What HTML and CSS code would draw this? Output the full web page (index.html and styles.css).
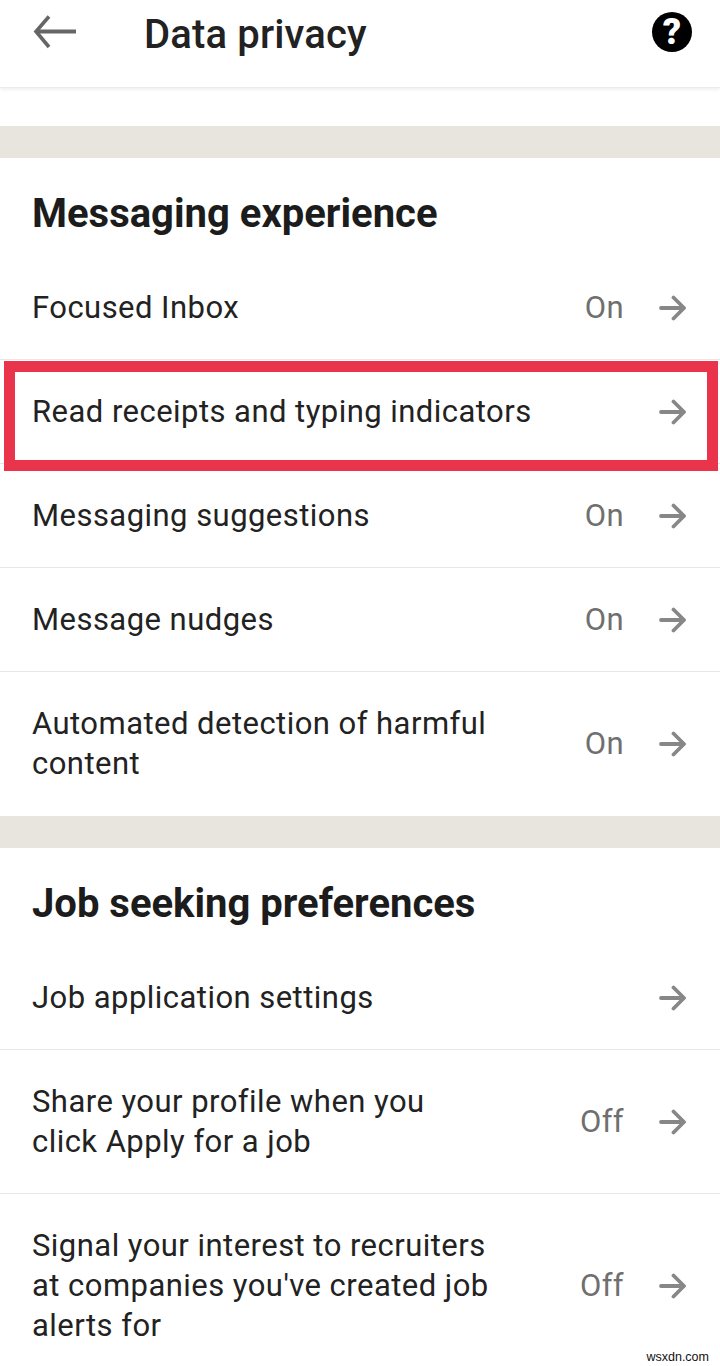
FILE: index.html
```html
<!DOCTYPE html>
<html lang="en">
<head>
<meta charset="utf-8">
<title>Data privacy</title>
<link rel="stylesheet" href="styles.css">
</head>
<body>
<svg class="sprite" width="0" height="0" aria-hidden="true">
  <symbol id="go" viewBox="0 0 28 28"><path d="M3 14H25M15.5 3.5 26 14 15.5 24.5" fill="none" stroke="#878787" stroke-width="3.8" stroke-linecap="round" stroke-linejoin="round"/></symbol>
</svg>
<div class="page">
  <header class="topbar">
    <svg class="back" viewBox="0 0 44 34" aria-hidden="true"><path d="M43 16.5H4" fill="none" stroke="#666" stroke-width="4"/><path d="M16 1.5 3 16.5 16 32" fill="none" stroke="#666" stroke-width="3.6"/></svg>
    <h1 class="title">Data privacy</h1>
    <span class="help">?</span>
  </header>
  <div class="gap"></div>
  <div class="band"></div>
  <section>
    <h2 class="heading">Messaging experience</h2>
    <div class="row"><span class="label">Focused Inbox</span><span class="value">On</span><svg class="go"><use href="#go"/></svg></div>
    <div class="row row-marked"><span class="label label-full">Read receipts and typing indicators</span><svg class="go"><use href="#go"/></svg><div class="mark"></div></div>
    <div class="row"><span class="label">Messaging suggestions</span><span class="value">On</span><svg class="go"><use href="#go"/></svg></div>
    <div class="row"><span class="label">Message nudges</span><span class="value">On</span><svg class="go"><use href="#go"/></svg></div>
    <div class="row row-last"><span class="label">Automated detection of harmful content</span><span class="value">On</span><svg class="go"><use href="#go"/></svg></div>
  </section>
  <div class="band"></div>
  <section>
    <h2 class="heading">Job seeking preferences</h2>
    <div class="row"><span class="label">Job application settings</span><svg class="go"><use href="#go"/></svg></div>
    <div class="row"><span class="label">Share your profile when you<br>click Apply for a job</span><span class="value">Off</span><svg class="go"><use href="#go"/></svg></div>
    <div class="row row-last"><span class="label">Signal your interest to recruiters at companies you've created job alerts for</span><span class="value">Off</span><svg class="go"><use href="#go"/></svg></div>
  </section>
  <div class="watermark">wsxdn.com</div>
</div>
</body>
</html>
```

FILE: styles.css
```css
* { box-sizing: border-box; }
html, body { margin: 0; padding: 0; background: #fff; }
.sprite { position: absolute; }
.page {
  position: relative;
  width: 720px;
  height: 1366px;
  overflow: hidden;
  font-family: Roboto, "Noto Sans", sans-serif;
  color: #1d1d1d;
}
.topbar {
  position: relative;
  display: flex;
  align-items: flex-start;
  height: 88px;
  padding: 12px 28px 0 33px;
  background: #fff;
  border-bottom: 1px solid #ececec;
  box-shadow: 0 2px 3px rgba(0,0,0,.06);
}
.back { width: 44px; height: 34px; flex: none; margin-top: 3px; }
.title {
  margin: 1px 0 0 67px;
  flex: 1;
  font-size: 40px;
  line-height: 44px;
  font-weight: 500;
  letter-spacing: .15px;
  color: #222;
}
.help {
  display: flex;
  align-items: center;
  justify-content: center;
  width: 40px;
  height: 40px;
  border-radius: 50%;
  background: #000;
  color: #fff;
  font-size: 36px;
  line-height: 40px;
  font-weight: 900;
}
.gap { height: 38px; }
.band { height: 32px; background: #e8e5df; }
.heading {
  margin: 0;
  padding: 34px 32px 20px;
  font-size: 40px;
  line-height: 44px;
  font-weight: 700;
  color: #1c1c1c;
}
.row {
  position: relative;
  display: flex;
  align-items: center;
  padding: 32px 34px 31px 32px;
  border-bottom: 1px solid #e6e6e6;
}
.row-last { border-bottom: 0; padding-bottom: 32px; }
.label {
  flex: 1;
  max-width: 478px;
  margin-right: auto;
  font-size: 31px;
  line-height: 40px;
  letter-spacing: .46px;
  color: #222;
}
.label-full { max-width: none; }
.value {
  margin-right: 34px;
  font-size: 31px;
  line-height: 40px;
  letter-spacing: .4px;
  color: #6f6f6f;
}
.go { width: 28px; height: 28px; flex: none; }
.mark {
  position: absolute;
  left: 4px;
  right: 2px;
  top: 1px;
  bottom: -8px;
  border: 11px solid #e9344c;
  pointer-events: none;
}
.watermark {
  position: absolute;
  right: 9px;
  bottom: 0;
  padding: 0 2px;
  background: #fff;
  font-family: "Liberation Sans", sans-serif;
  font-size: 12.5px;
  line-height: 18px;
  color: #111;
}
```
